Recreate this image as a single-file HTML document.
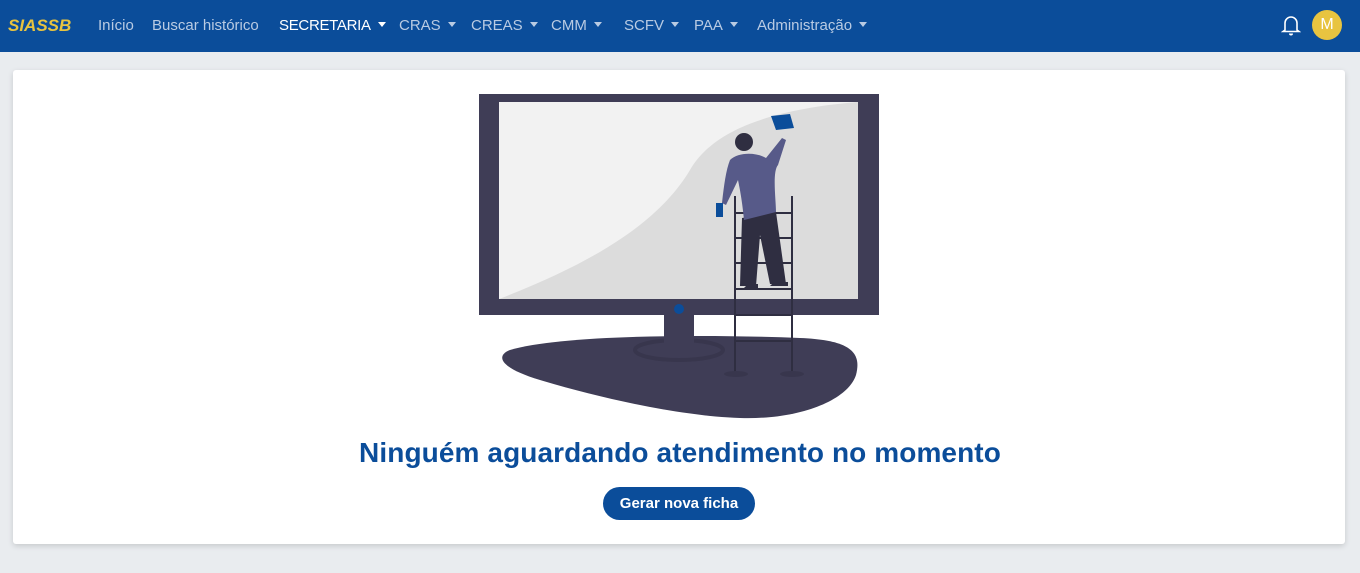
<!DOCTYPE html>
<html><head><meta charset="utf-8"><style>
*{margin:0;padding:0;box-sizing:border-box}
body{width:1360px;height:573px;background:#e9ecef;font-family:"Liberation Sans",sans-serif;position:relative;overflow:hidden}
.nav{position:absolute;left:0;top:0;width:1360px;height:52px;background:#0b4d9a}
.nav span{position:absolute;top:17px;font-size:15px;color:#b9cbe3;white-space:nowrap}
.car{display:inline-block;width:0;height:0;border-left:4px solid transparent;border-right:4px solid transparent;border-top:5px solid currentColor;margin-left:7px;vertical-align:3px}
.card{position:absolute;left:13px;top:70px;width:1332px;height:474px;background:#fff;border-radius:3px;box-shadow:0 2px 6px rgba(0,0,0,.15)}
h1{position:absolute;left:0;width:1360px;top:437px;text-align:center;font-size:28px;letter-spacing:0.1px;font-weight:bold;color:#0b4d9a}
.btn{position:absolute;left:603px;top:487px;width:152px;height:33px;border-radius:17px;background:#0b4d9a;color:#fff;font-size:15px;font-weight:bold;text-align:center;line-height:33px}
</style></head><body>
<div class="nav">
<span style="left:8px;top:16px;color:#e8c440;font-weight:bold;font-style:italic;font-size:17px">SIASSB</span>
<span style="left:98px">Início</span>
<span style="left:152px">Buscar histórico</span>
<span style="left:279px;color:#fff;letter-spacing:-0.3px">SECRETARIA<i class="car"></i></span>
<span style="left:399px">CRAS<i class="car"></i></span>
<span style="left:471px">CREAS<i class="car"></i></span>
<span style="left:551px">CMM<i class="car"></i></span>
<span style="left:624px">SCFV<i class="car"></i></span>
<span style="left:694px">PAA<i class="car"></i></span>
<span style="left:757px">Administração<i class="car"></i></span>
<svg style="position:absolute;left:1281px;top:14px" width="20" height="22" viewBox="0 0 20 22"><path d="M4 16V9a6 6 0 0 1 12 0v7l2 1.5H2L4 16z" fill="none" stroke="#fff" stroke-width="1.6"/><path d="M8 19.5a2 2 0 0 0 4 0z" fill="#fff"/></svg>
<div style="position:absolute;left:1312px;top:10px;width:30px;height:30px;border-radius:50%;background:#e8c440;color:#fff;font-size:16px;text-align:center;line-height:30px">M</div>
</div>
<div class="card"></div>
<svg style="position:absolute;left:0;top:0" width="1360" height="573">
<path d="M510 350 C560 335 700 334 800 338 C850 340 862 352 856 375 C848 400 800 420 740 418 C680 416 600 398 540 380 C500 368 495 356 510 350Z" fill="#3f3d56"/>
<ellipse cx="679" cy="350" rx="44" ry="10" fill="none" stroke="#38364d" stroke-width="4"/>
<rect x="664" y="312" width="30" height="36" fill="#3f3d56"/>
<rect x="479" y="94" width="400" height="221" fill="#3f3d56"/>
<rect x="499" y="102" width="359" height="197" fill="#f2f2f2"/>
<path d="M499 299 C600 260 660 220 690 170 C710 135 760 110 858 102 V299Z" fill="#dcdcdc"/>
<circle cx="679" cy="309" r="5" fill="#0b4d9a"/>
<g stroke="#2f2e41" stroke-width="2"><line x1="735" y1="196" x2="735" y2="376"/><line x1="792" y1="196" x2="792" y2="376"/>
<line x1="735" y1="213" x2="792" y2="213"/><line x1="735" y1="238" x2="792" y2="238"/><line x1="735" y1="263" x2="792" y2="263"/><line x1="735" y1="289" x2="792" y2="289"/><line x1="735" y1="315" x2="792" y2="315"/><line x1="735" y1="341" x2="792" y2="341"/></g>
<ellipse cx="736" cy="374" rx="12" ry="3" fill="#38364d"/><ellipse cx="792" cy="374" rx="12" ry="3" fill="#38364d"/>
<path d="M742 218 L740 286 L756 286 L760 235 L770 284 L786 284 L776 212Z" fill="#2f2e41"/>
<path d="M744 288 h14 v-4 h-10z M770 286 h18 v-4 h-14z" fill="#2f2e41"/>
<path d="M730 160 C738 152 756 152 766 158 L782 138 L786 140 L778 165 C772 172 776 200 776 212 L744 220 C742 200 740 190 738 180 L726 205 L722 203 C724 185 726 170 730 160Z" fill="#575a89"/>
<circle cx="744" cy="142" r="9" fill="#2f2e41"/>
<path d="M771 116 L790 114 L794 128 L776 130Z" fill="#0b4d9a"/>
<rect x="716" y="203" width="7" height="14" fill="#0b4d9a"/>
</svg>
<h1>Ninguém aguardando atendimento no momento</h1>
<div class="btn">Gerar nova ficha</div>
</body></html>
